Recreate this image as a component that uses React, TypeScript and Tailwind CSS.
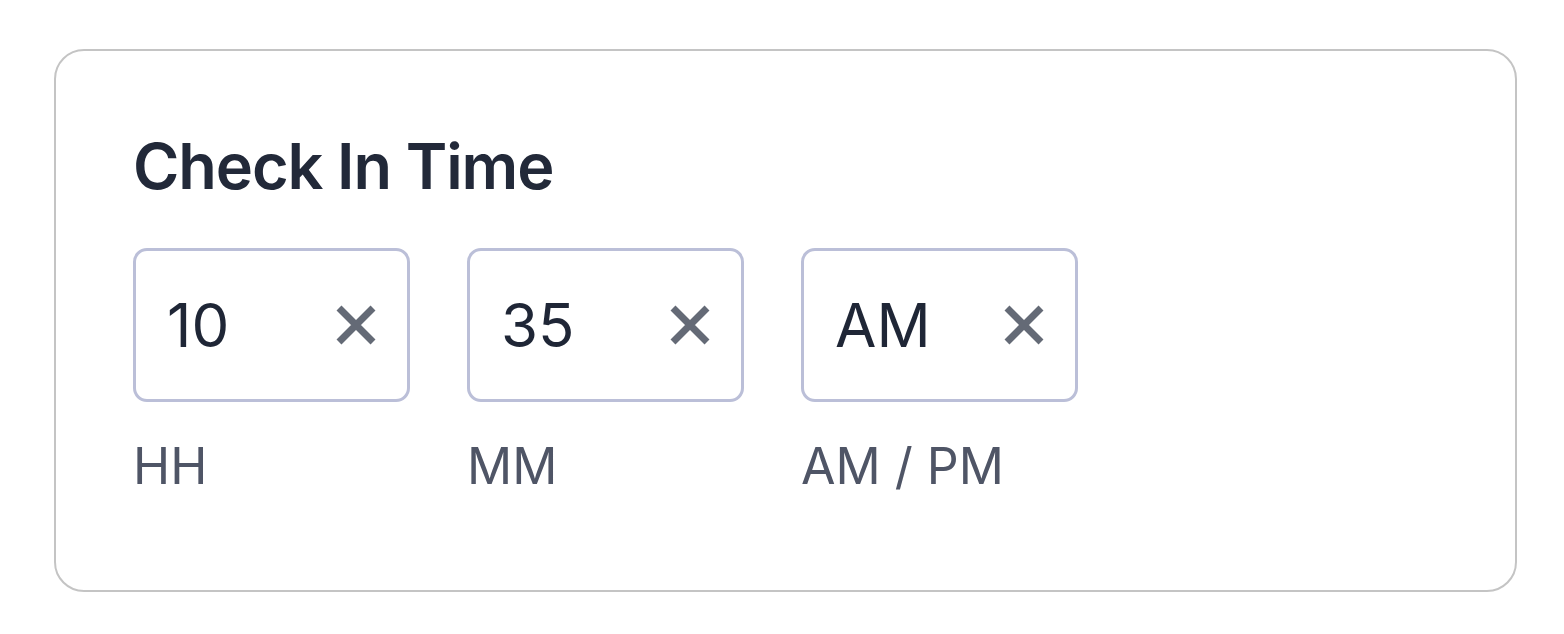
import React from 'react'

type Field = { value: string; label: string }

const fields: Field[] = [
    { value: '10', label: 'HH' },
    { value: '35', label: 'MM' },
    { value: 'AM', label: 'AM / PM' },
]

function ClearIcon() {
    return (
        <svg
            width="40"
            height="40"
            viewBox="0 0 40 40"
            fill="none"
            stroke="currentColor"
            strokeWidth="7"
            strokeLinecap="butt"
        >
            <path d="M3 3L37 37M37 3L3 37" />
        </svg>
    )
}

export default function App() {
    return (
        <div className="min-h-screen bg-white pt-[49px] pl-[54px] font-['Inter','Liberation_Sans',sans-serif]">
            <div className="w-[1463px] h-[543px] rounded-[30px] border-2 border-[#c4c4c4] bg-white pl-[77px] pt-[84px]">
                <h2 className="text-[63px] leading-[63px] font-semibold text-[#222939] tracking-[-1.1px]">
                    Check In Time
                </h2>
                <div className="flex gap-[57px] mt-[50px]">
                    {fields.map((f) => (
                        <div key={f.label} className="flex flex-col">
                            <div className="w-[277px] h-[154px] rounded-[14px] border-[3px] border-[#bbbfd8] flex items-center justify-between pl-[31px] pr-[31px]">
                                <span className="text-[60px] leading-none text-[#1f2636]">
                                    {f.value}
                                </span>
                                <span className="text-[#646a76]">
                                    <ClearIcon />
                                </span>
                            </div>
                            <span className="mt-[39px] text-[50px] leading-[50px] text-[#4f5566]">
                                {f.label}
                            </span>
                        </div>
                    ))}
                </div>
            </div>
        </div>
    )
}
